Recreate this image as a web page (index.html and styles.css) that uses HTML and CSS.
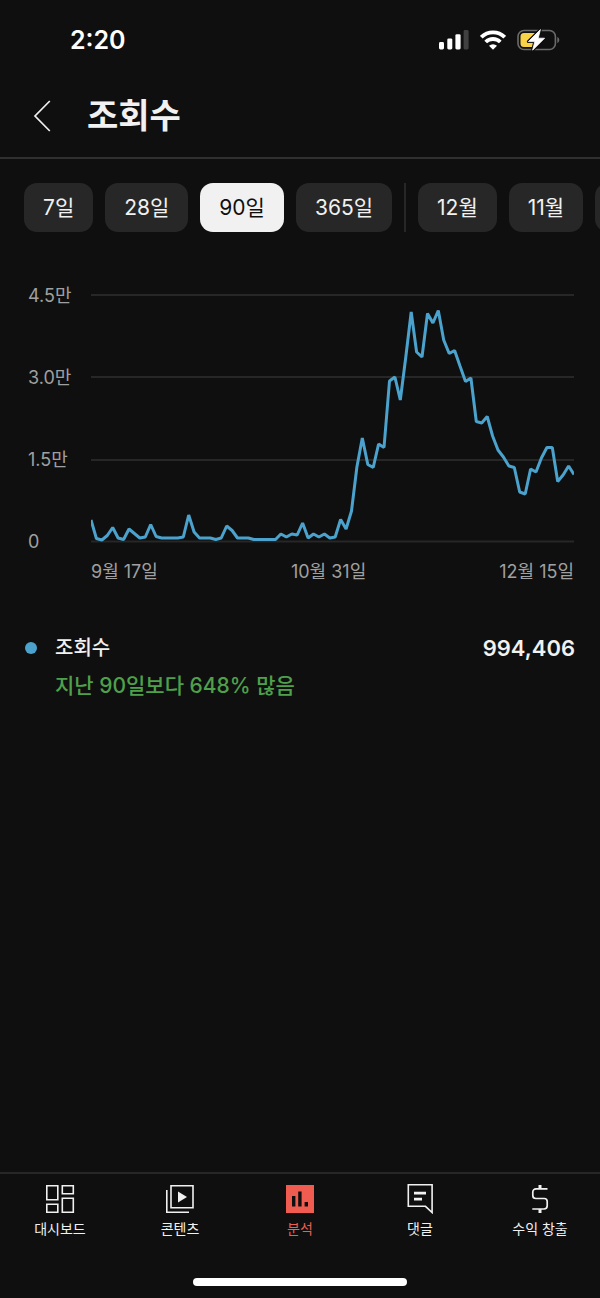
FILE: index.html
```html
<!DOCTYPE html>
<html lang="ko">
<head>
<meta charset="utf-8">
<meta name="viewport" content="width=device-width, initial-scale=1">
<title>조회수</title>
<link rel="stylesheet" href="styles.css">
</head>
<body>
<div class="status">
  <time class="clock">2:20</time>
  <div class="status-icons">
    <svg width="30" height="20" viewBox="0 0 30 20" fill="#fff" aria-hidden="true">
      <rect x="0" y="12" width="5" height="7.4" rx="1.4"/>
      <rect x="8.3" y="8.4" width="5" height="11" rx="1.4"/>
      <rect x="16.4" y="4.2" width="5.2" height="15.2" rx="1.4"/>
      <rect x="24.6" y="0" width="5" height="19.4" rx="1.4" fill="#404040"/>
    </svg>
    <svg width="26" height="20" viewBox="0 0 26 20" aria-hidden="true">
      <g fill="none" stroke="#fff" stroke-width="3.8">
        <path d="M1.3 7.2a16.6 16.6 0 0 1 23.4 0"/>
        <path d="M5.7 12a10.4 10.4 0 0 1 14.6 0"/>
      </g>
      <path d="M13 19.8 9 15.8a5.7 5.7 0 0 1 8 0z" fill="#fff"/>
    </svg>
    <svg width="43" height="22" viewBox="0 0 43 22" aria-hidden="true">
      <rect x="1" y="1.5" width="37.4" height="19" rx="6" fill="none" stroke="#6b6b6b" stroke-width="1.6"/>
      <path d="M40.3 8v6c2.6-1 2.6-5 0-6z" fill="#6b6b6b"/>
      <path d="M7 4h11v14H7a3.5 3.5 0 0 1-3.5-3.5v-7A3.5 3.5 0 0 1 7 4z" fill="#f8d347"/>
      <path d="M23.4 .6 11.4 12.6h6.4L15.6 21.2 27.6 9.2h-6.4z" fill="#0f0f0f" stroke="#0f0f0f" stroke-width="3" stroke-linejoin="round"/>
      <path d="M23.4 .6 11.4 12.6h6.4L15.6 21.2 27.6 9.2h-6.4z" fill="#fff" stroke="#fff" stroke-width=".8" stroke-linejoin="round"/>
    </svg>
  </div>
</div>
<header class="header">
  <button class="back" aria-label="뒤로">
    <svg width="18" height="32" viewBox="0 0 18 32" fill="none" stroke="#f1f1f1" stroke-width="1.7"><path d="M16.8 1 2 16l14.8 15"/></svg>
  </button>
  <h1 class="title">조회수</h1>
</header>
<main class="main">
  <div class="chips">
    <button class="chip">7일</button>
    <button class="chip">28일</button>
    <button class="chip chip-on" aria-pressed="true">90일</button>
    <button class="chip">365일</button>
    <span class="divider"></span>
    <button class="chip">12월</button>
    <button class="chip">11월</button>
    <button class="chip">10월</button>
  </div>
  <section class="chart">
    <div class="y-axis"><span>4.5만</span><span>3.0만</span><span>1.5만</span><span>0</span></div>
    <svg class="plot" viewBox="0 0 483 250" preserveAspectRatio="none" role="img" aria-label="조회수 그래프">
      <path d="M0 2h483M0 84h483M0 167h483M0 248.5h483" stroke="#272727" stroke-width="2"/>
      <path class="line" d="M0 227L5.4 245.5 10.9 247 16.3 242.5 21.7 234.5 27.1 245 32.6 246.5 38 236 43.4 240.5 48.800 245 54.3 244 59.7 231.5 65.1 243.5 70.6 245H86.8L92.3 244 97.7 222 103.1 239 108.5 245H119.4L124.8 246.5 130.2 245 135.7 233 141.1 237.5 146.5 245H157.4L162.8 246.5H184.5L189.9 241 195.4 244 200.8 241 206.2 242 211.6 230 217.1 245 222.5 241 227.9 244 233.4 241 238.8 245 244.2 244 249.6 226.5 255.1 236 260.5 218 265.9 174 271.3 145 276.8 171.5 282.2 174.5 287.6 151 293 154.5 298.5 88 303.9 84 309.3 107 314.8 64 320.2 19 325.6 59 331 64 336.5 20.5 341.9 30 347.3 17.5 352.7 47 358.2 60.5 363.6 57.5 369 73 374.5 88.5 379.9 85 385.3 128.5 390.7 130 396.2 123.5 401.6 143 407 157 412.4 164 417.9 173 423.3 174.5 428.7 199 434.2 201 439.6 176 445 179 450.4 165 455.9 154.5H461.3L466.7 188.5 472.1 182 477.6 173 483 181.5"/>
    </svg>
    <div class="x-axis"><span>9월 17일</span><span>10월 31일</span><span>12월 15일</span></div>
  </section>
  <section class="summary">
    <span class="dot"></span>
    <span class="label">조회수</span>
    <strong class="total">994,406</strong>
    <p class="change">지난 90일보다 648% 많음</p>
  </section>
</main>
<nav class="tabs">
  <a class="tab" href="#dashboard">
    <svg width="30" height="30" viewBox="0 0 30 30" fill="none" stroke="#f1f1f1" stroke-width="1.6"><path d="M1.8 1.8h11v14h-11zM17.3 1.8h11v8h-11zM1.8 20.3h11v8h-11zM17.3 14.2h11v14h-11z"/></svg>
    대시보드</a>
  <a class="tab" href="#content">
    <svg width="30" height="30" viewBox="0 0 30 30" fill="none" stroke="#f1f1f1" stroke-width="1.6"><path d="M6 1.8h22v22H6zM1.8 6v22.2H24"/><path d="M13 7.5v11l9-5.5z" fill="#f1f1f1" stroke="none"/></svg>
    콘텐츠</a>
  <a class="tab tab-on" href="#analytics" aria-current="page">
    <svg width="30" height="30" viewBox="0 0 30 30"><path d="M1 1h28v28H1z" fill="#f05c4f"/><path d="M7 12h3.4v10.5H7zM13.2 7.5h3.4v15h-3.4zM19.6 18H23v4.5h-3.4z" fill="#0f0f0f"/></svg>
    분석</a>
  <a class="tab" href="#comments">
    <svg width="30" height="30" viewBox="0 0 30 30" fill="none" stroke="#f1f1f1" stroke-width="1.6"><path d="M3.3 .8h23.8v27.7l-6.6-6.2H3.3z"/><path d="M9 9.1h12M9 15.1h8" stroke-width="2.8"/></svg>
    댓글</a>
  <a class="tab" href="#earn">
    <svg width="30" height="30" viewBox="0 0 30 30" fill="none" stroke="#f1f1f1" stroke-width="1.7"><path d="M22.500 4.800H11a3.200 3.200 0 0 0-3.200 3.200V11.500a3 3 0 0 0 3 3h8.400a3 3 0 0 1 3 3v4.300a3.200 3.200 0 0 1-3.200 3.200H7.300"/><path d="M15 1v4M15 25v4" stroke-width="3"/></svg>
    수익 창출</a>
</nav>
<div class="home"><span class="home-bar"></span></div>
</body>
</html>
```
FILE: styles.css
```css
* { box-sizing: border-box; }
body {
  margin: 0;
  min-height: 100vh;
  display: flex;
  flex-direction: column;
  background: #0f0f0f;
  color: #f1f1f1;
  font-family: Inter, "Noto Sans CJK KR", sans-serif;
}
button { border: 0; padding: 0; font: inherit; color: inherit; background: none; }
svg { display: block; }
.status {
  height: 74px;
  padding: 6px 40px 0 70px;
  display: flex;
  align-items: center;
  justify-content: space-between;
}
.clock { font-size: 25px; font-weight: 600; line-height: 32px; color: #fff; }
.status-icons { display: flex; align-items: center; gap: 11px; }
.header {
  height: 85px;
  padding: 0 33px;
  display: flex;
  align-items: center;
  gap: 36px;
  border-bottom: 2px solid #303030;
}
.title { margin: 0; font-size: 34px; font-weight: 700; line-height: 40px; }
.main { flex: 1; min-width: 0; }
.chips {
  display: flex;
  gap: 12px;
  padding: 24px 0 0 24px;
  overflow-x: auto;
  scrollbar-width: none;
}
.chip {
  flex: none;
  height: 49px;
  padding: 0 19px;
  border-radius: 13px;
  background: #272727;
  font-size: 21px;
  line-height: 28px;
}
.chip-on { background: #f1f1f1; color: #0f0f0f; }
.divider { flex: none; width: 2px; background: #272727; }
.chart {
  display: grid;
  grid-template-columns: 63px 1fr;
  padding: 61px 26px 0 28px;
  color: #a0a0a0;
  font-size: 18px;
  line-height: 24px;
}
.y-axis {
  display: flex;
  flex-direction: column;
  justify-content: space-between;
  margin: -9px 0 -11px;
}
.plot { width: 100%; height: 250px; }
.line {
  fill: none;
  stroke: #4ba3cd;
  stroke-width: 3;
  stroke-linejoin: bevel;
}
.x-axis {
  grid-column: 2;
  display: flex;
  justify-content: space-between;
  padding-top: 17px;
}
.summary {
  display: grid;
  grid-template-columns: 12px 1fr auto;
  column-gap: 18px;
  row-gap: 10px;
  align-items: center;
  padding: 50px 25px 0;
  line-height: 28px;
}
.dot { width: 12px; height: 12px; border-radius: 50%; background: #4ba3cd; }
.label { font-size: 20px; font-weight: 500; }
.total { font-size: 22px; font-weight: 600; }
.change { grid-column: 2 / 4; margin: 0; font-size: 21px; font-weight: 500; color: #4fa04b; }
.tabs {
  display: grid;
  grid-template-columns: repeat(5, 1fr);
  border-top: 2px solid #272727;
  padding-top: 10px;
}
.tab {
  display: flex;
  flex-direction: column;
  align-items: center;
  gap: 5px;
  color: #f1f1f1;
  font-size: 14px;
  line-height: 20px;
  text-decoration: none;
}
.tab-on { color: #f05c4f; }
.home { display: flex; justify-content: center; padding: 39px 0 12px; }
.home-bar { width: 214px; height: 8px; border-radius: 4px; background: #fff; }
```
